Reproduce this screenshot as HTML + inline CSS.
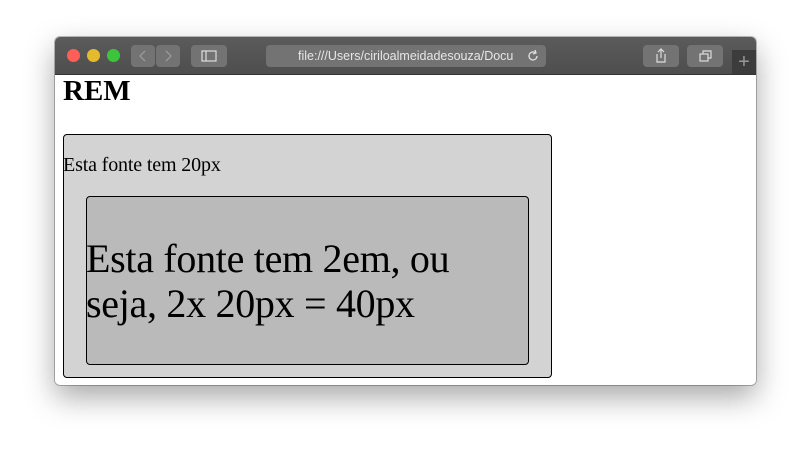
<!DOCTYPE html>
<html><head><style>
body{margin:0;width:810px;height:456px;background:#fff;position:relative;overflow:hidden;font-family:"Liberation Sans",sans-serif}
.win{position:absolute;left:55px;top:37px;width:701px;height:348px;border-radius:5px;overflow:hidden;box-shadow:0 12px 30px rgba(0,0,0,.35),0 0 0 1px rgba(0,0,0,.25);background:#fff}
.bar{position:absolute;left:0;top:0;width:701px;height:37px;background:linear-gradient(#5b5b5b,#4e4e4e);border-bottom:1px solid #333}
.dot{position:absolute;top:12px;width:13px;height:13px;border-radius:50%}
.btn{position:absolute;top:8px;height:22px;background:#737373;border-radius:4px}
.tab{position:absolute;left:677px;top:13px;width:24px;height:24px;background:#3c3c3c;color:#999;font-size:20px;text-align:center;line-height:24px}
.c{position:absolute;font-family:"Liberation Serif",serif;color:#000}
</style></head><body>
<div class="win">
<div class="bar">
<div class="dot" style="left:12px;background:#fc5f57"></div>
<div class="dot" style="left:32px;background:#e3bb2c"></div>
<div class="dot" style="left:52px;background:#3ec43b"></div>
<div class="btn" style="left:76px;width:24px"><svg width="24" height="22"><path d="M14 6l-5 5 5 5" stroke="#999" fill="none" stroke-width="1.3"/></svg></div>
<div class="btn" style="left:101px;width:24px"><svg width="24" height="22"><path d="M10 6l5 5-5 5" stroke="#999" fill="none" stroke-width="1.3"/></svg></div>
<div class="btn" style="left:136px;width:36px"><svg width="36" height="22"><rect x="11" y="6" width="14" height="10" stroke="#ddd" fill="none" stroke-width="1.2"/><path d="M15 6v10" stroke="#ddd" stroke-width="1.2"/></svg></div>
<div class="btn" style="left:211px;width:280px;color:#e6e6e6;font-size:12.5px;line-height:22px"><span style="position:absolute;left:32px">file:///Users/ciriloalmeidadesouza/Docu</span><svg style="position:absolute;left:260px;top:4px" width="14" height="14"><path d="M11 7a4 4 0 1 1-2-3.5" stroke="#ddd" fill="none" stroke-width="1.3"/><path d="M9 1l1 3-3 1" stroke="#ddd" fill="none" stroke-width="1.3"/></svg></div>
<div class="btn" style="left:588px;width:36px"><svg width="36" height="22"><path d="M14 9v8h8v-8M18 4v9M15 7l3-3 3 3" stroke="#ddd" fill="none" stroke-width="1.2"/></svg></div>
<div class="btn" style="left:632px;width:36px"><svg width="36" height="22"><rect x="13" y="9" width="8" height="7" stroke="#ddd" fill="none" stroke-width="1.2"/><path d="M16 9V6h8v7h-3" stroke="#ddd" fill="none" stroke-width="1.2"/></svg></div>
<div class="tab">+</div>
</div>
<div class="c" style="left:8px;top:38px;font-size:29px;font-weight:bold">REM</div>
<div style="position:absolute;left:8px;top:97px;width:487px;height:242px;background:#d3d3d3;border:1px solid #000;border-radius:4px"></div>
<div class="c" style="left:8px;top:117px;font-size:20px;letter-spacing:-0.15px">Esta fonte tem 20px</div>
<div style="position:absolute;left:31px;top:159px;width:441px;height:167px;background:#bababa;border:1px solid #000;border-radius:4px"></div>
<div class="c" style="left:31px;top:199px;font-size:40px;line-height:45px;letter-spacing:-0.3px">Esta fonte tem 2em, ou<br>seja, 2x 20px = 40px</div>
</div>
</body></html>
